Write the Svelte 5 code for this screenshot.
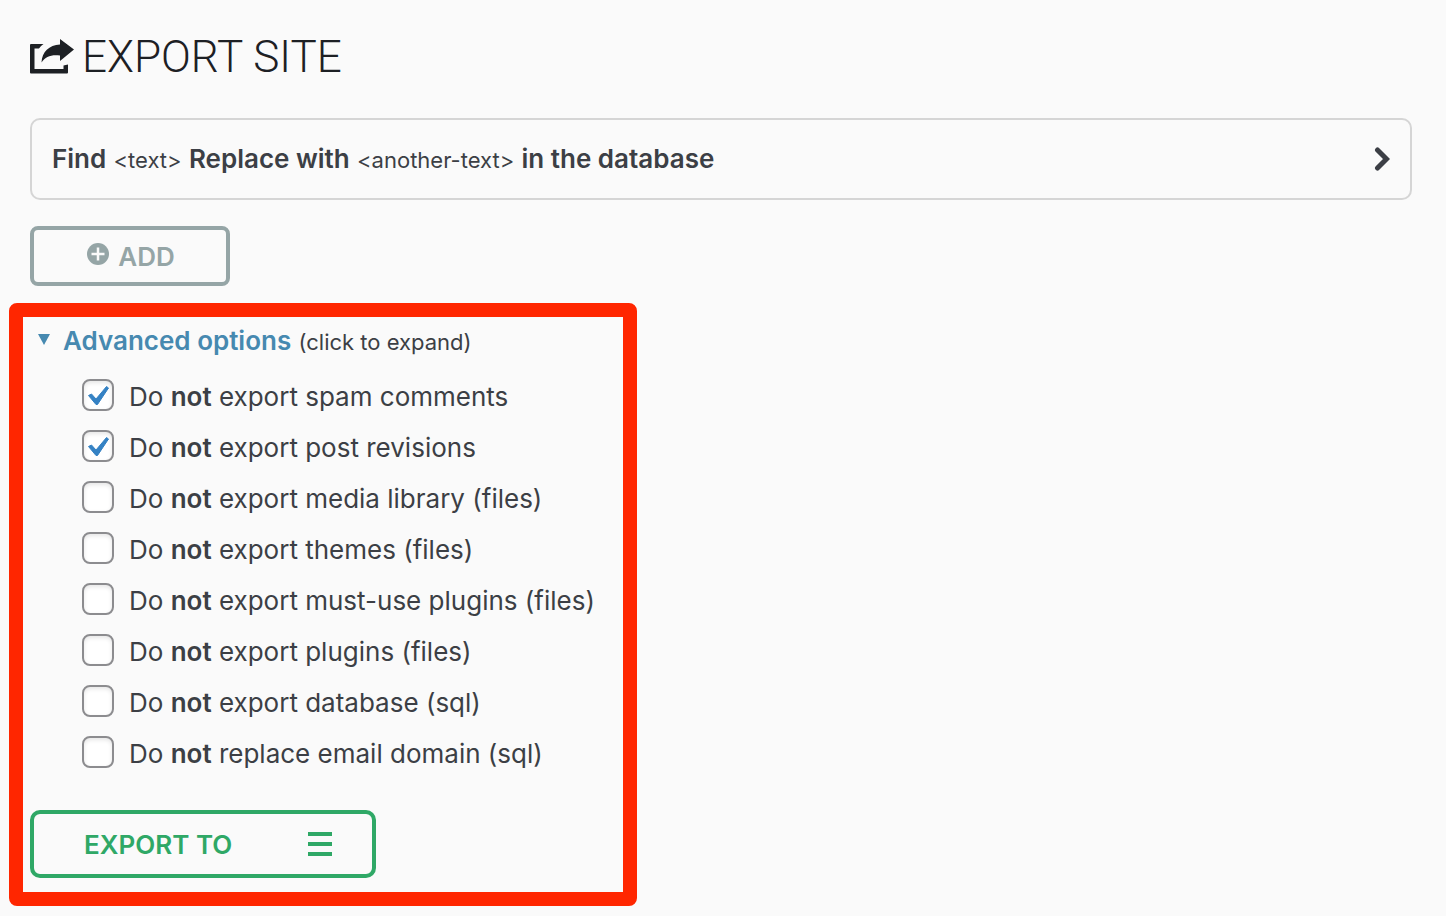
<script>
	let options = [
		{ id: 'spam', action: 'export spam comments', checked: true },
		{ id: 'revisions', action: 'export post revisions', checked: true },
		{ id: 'media', action: 'export media library (files)', checked: false },
		{ id: 'themes', action: 'export themes (files)', checked: false },
		{ id: 'muplugins', action: 'export must-use plugins (files)', checked: false },
		{ id: 'plugins', action: 'export plugins (files)', checked: false },
		{ id: 'database', action: 'export database (sql)', checked: false },
		{ id: 'email', action: 'replace email domain (sql)', checked: false }
	];
	let replaces = 1;
	let open = true;

	const addReplace = () => replaces += 1;
</script>

<main>
	<h1>
		<svg class="share" viewBox="0 0 44 36" aria-hidden="true">
			<path d="M13.500 5H1Q0 5 0 6V33.500Q0 34.500 1 34.500H37Q38 34.500 38 33.500V25.500L33.500 26.500V30H4.500V9.500H9Q10.500 7 13.500 5Z" fill="currentColor" />
			<path d="M30 0L44 10.500L30 22V16.500C21 15.500 15.500 17.500 11.500 23.500C12 13 19 6 30 5.500Z" fill="currentColor" />
		</svg>
		EXPORT SITE
	</h1>

	{#each Array(replaces) as _}
	<button class="replace" type="button">
		<span><b>Find</b> <small>&lt;text&gt;</small> <b>Replace with</b> <small>&lt;another-text&gt;</small> <b>in the database</b></span>
		<svg class="chevron" viewBox="0 0 16 26" aria-hidden="true">
			<path d="M3.500 5L12.500 14L3.500 23" fill="none" stroke="currentColor" stroke-width="5" stroke-linecap="round" />
		</svg>
	</button>
	{/each}

	<button class="add" type="button" on:click={ addReplace }>
		<svg class="plus" viewBox="0 0 22 22" aria-hidden="true">
			<circle cx="11" cy="11" r="11" fill="currentColor" />
			<path d="M11 4.500V17.500M4.500 11H17.500" stroke="#fafafa" stroke-width="2.500" />
		</svg>
		ADD
	</button>

	<section class="highlight">
		<details bind:open>
			<summary>
				<svg class="caret" class:closed={ !open } viewBox="0 0 12 12" aria-hidden="true">
					<path d="M0 0H12L6 11Z" fill="currentColor" />
				</svg>
				<span><b>Advanced options</b> <small>(click to expand)</small></span>
			</summary>
			<ul>
				{#each options as option}
				<li>
					<input type="checkbox" id={ option.id } bind:checked={ option.checked }>
					<label for={ option.id }>Do <b>not</b> { option.action }</label>
				</li>
				{/each}
			</ul>
		</details>

		<button class="export" type="button">
			EXPORT TO
			<svg class="bars" viewBox="0 0 24 24" aria-hidden="true">
				<path d="M0 2H24M0 12H24M0 22H24" stroke="currentColor" stroke-width="4" />
			</svg>
		</button>
	</section>
</main>

<style>
:global(body) {
  margin: 0;
  background: #fafafa;
}

main {
  display: flex;
  flex-direction: column;
  align-items: flex-start;
  padding: 33px 34px 8px 30px;
  font-family: Inter, "Liberation Sans", sans-serif;
  font-size: 26px;
  color: #3c3f45;
}

h1 {
  display: flex;
  align-items: center;
  gap: 8px;
  margin: 0 0 37px;
  font-family: Roboto, Inter, sans-serif;
  font-size: 44px;
  font-weight: 300;
  line-height: 48px;
  color: #1d2024;
}

.share {
  width: 44px;
  height: 36px;
}

button {
  box-sizing: border-box;
  background: none;
  font-family: inherit;
  font-size: 26px;
  cursor: pointer;
}

b {
  font-weight: 600;
}

small {
  font-size: 22px;
}

.replace {
  display: flex;
  align-items: center;
  justify-content: space-between;
  width: 100%;
  min-height: 82px;
  margin-bottom: 26px;
  padding: 0 20px 2px;
  border: 2px solid #d5d5d5;
  border-radius: 10px;
  color: inherit;
  text-align: left;
}

.chevron {
  width: 16px;
  height: 26px;
}

.add {
  display: flex;
  align-items: center;
  justify-content: center;
  gap: 9px;
  width: 200px;
  height: 60px;
  padding: 0 6px 0 8px;
  border: 4px solid #95a5a6;
  border-radius: 8px;
  font-weight: 600;
  color: #95a5a6;
}

.plus {
  width: 22px;
  height: 22px;
  margin-bottom: 4px;
}

.highlight {
  box-sizing: border-box;
  width: 628px;
  max-width: 100%;
  margin: 17px 0 0 -21px;
  padding: 0 7px 14px;
  border: 14px solid #ff2600;
  border-radius: 8px;
}

summary {
  display: flex;
  align-items: center;
  gap: 13px;
  padding: 0 8px;
  line-height: 48px;
  list-style: none;
  cursor: pointer;
}

summary b {
  color: #4689b0;
}

.caret {
  width: 12px;
  height: 12px;
  margin-bottom: 4px;
  color: #4689b0;
}

.caret.closed {
  transform: rotate(-90deg);
}

ul {
  margin: 0;
  padding: 5px 0 31px 52px;
  list-style: none;
}

li {
  display: flex;
  align-items: center;
  gap: 15px;
  height: 51px;
}

input {
  flex: none;
  box-sizing: border-box;
  width: 32px;
  height: 32px;
  margin: 0 0 4px;
  border: 2px solid #8c8c8f;
  border-radius: 8px;
  background: #fff;
  box-shadow: inset 0 2px 4px rgba(0, 0, 0, .1);
  appearance: none;
}

input:checked {
  background: #fff url("data:image/svg+xml,%3Csvg xmlns='http://www.w3.org/2000/svg' viewBox='0 0 28 28'%3E%3Cpath d='M4.500 14.500L7.500 13L12 18L22.500 5.500L24.500 7L13.500 23.500H12Z' fill='%233582c4' stroke='%233582c4' stroke-linejoin='round'/%3E%3C/svg%3E") center / 28px no-repeat;
}

.export {
  display: flex;
  align-items: center;
  justify-content: space-between;
  width: 346px;
  height: 68px;
  padding: 0 40px 0 50px;
  border: 4px solid #2fa866;
  border-radius: 10px;
  font-weight: 600;
  color: #2fa866;
}

.bars {
  width: 24px;
  height: 24px;
}
</style>
